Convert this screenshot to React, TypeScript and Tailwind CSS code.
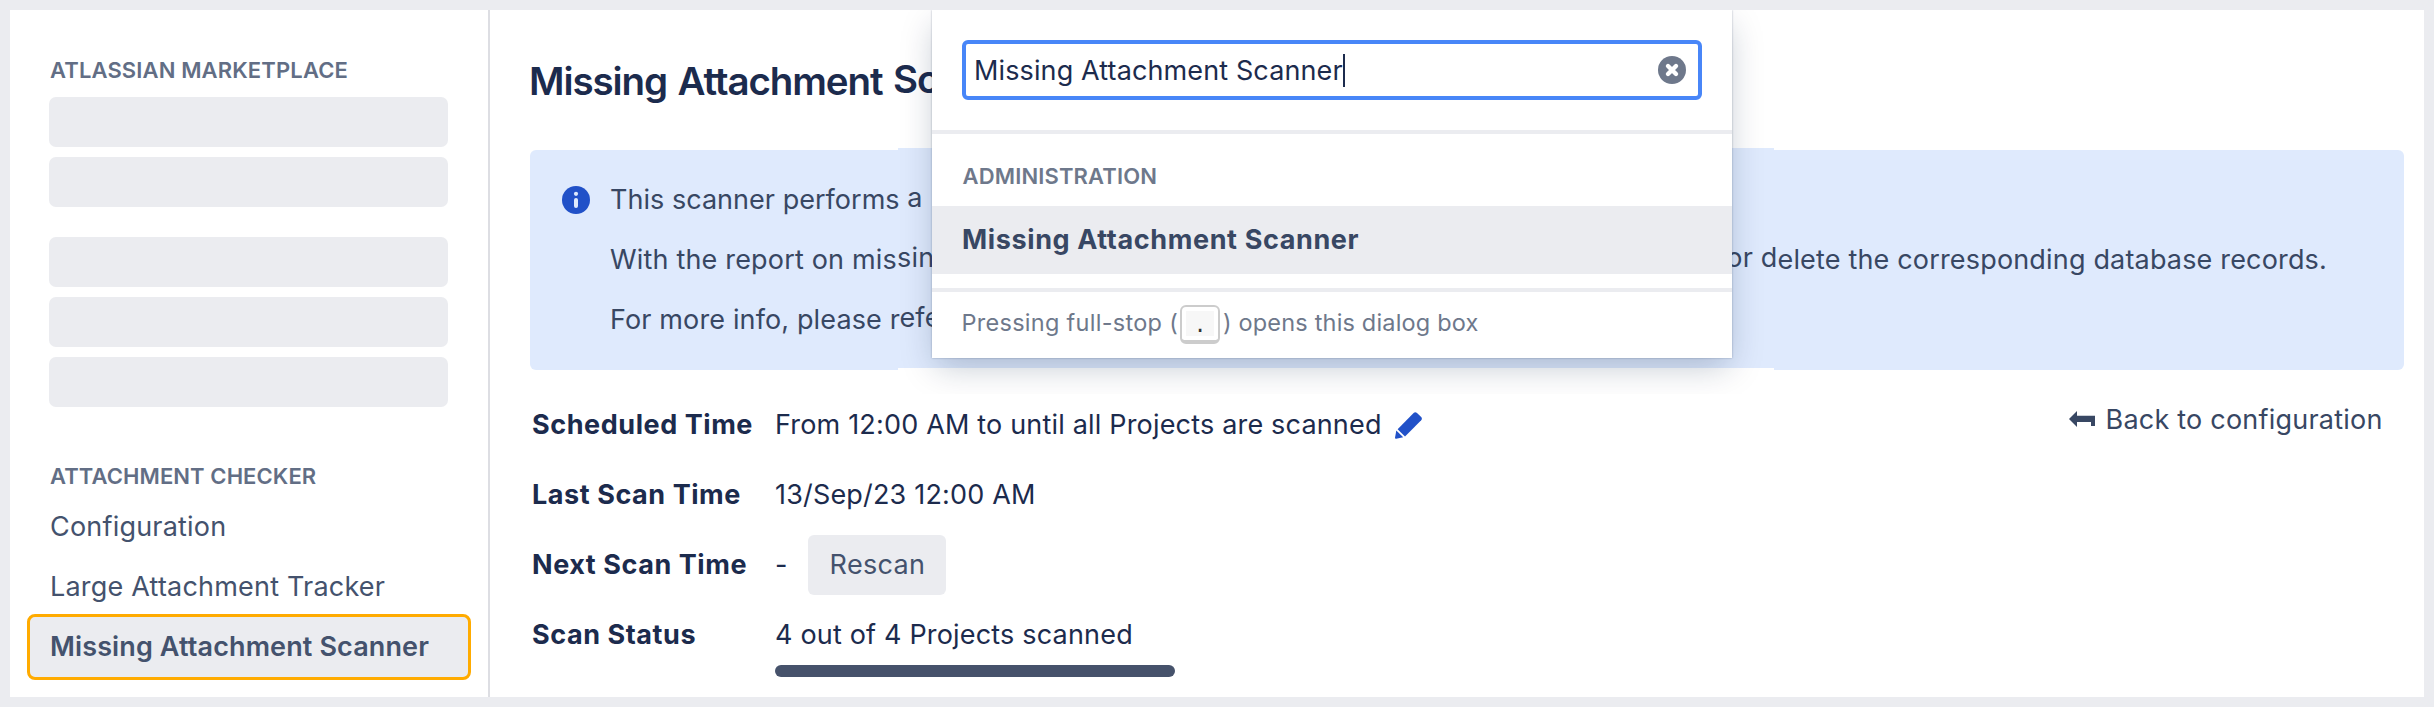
import type { ReactNode } from 'react'

const marketplaceGroups = [2, 3]

interface NavItemProps {
  label: string
  active?: boolean
}

function NavItem({ label, active }: NavItemProps) {
  if (active) {
    return (
      <a className="-mx-[22px] -my-[3px] flex h-[66px] items-center rounded-lg border-[3px] border-[#ffab00] bg-[#ebecf0] pl-[20px] font-semibold tracking-[0.12px]">
        {label}
      </a>
    )
  }
  return <a className="flex h-[60px] items-center pl-[1px] tracking-[0.2px]">{label}</a>
}

function Sidebar() {
  return (
    <aside className="w-[480px] shrink-0 border-r-2 border-[#dddee3] pr-[39px] pl-[39px] text-[27px] text-[#44526d]">
      <h2 className="mt-[45px] mb-[12px] pl-[1px] text-[22px] leading-[30px] font-semibold tracking-[0.14px] text-[#626e85]">
        ATLASSIAN MARKETPLACE
      </h2>
      <div className="flex flex-col gap-[30px]">
        {marketplaceGroups.map((count) => (
          <div key={count} className="flex flex-col gap-[10px]">
            {Array.from({ length: count }, (_, i) => (
              <div key={i} className="h-[50px] w-[399px] rounded-[7px] bg-[#ebecf0]" />
            ))}
          </div>
        ))}
      </div>
      <h2 className="mt-[54px] mb-[6px] pl-[1px] text-[22px] leading-[30px] font-semibold tracking-[0.09px] text-[#626e85]">
        ATTACHMENT CHECKER
      </h2>
      <nav className="w-[400px]">
        <NavItem label="Configuration" />
        <NavItem label="Large Attachment Tracker" />
        <NavItem label="Missing Attachment Scanner" active />
      </nav>
    </aside>
  )
}

function InfoIcon() {
  return (
    <svg viewBox="0 0 28 28" className="size-7">
      <circle cx="14" cy="14" r="14" fill="#2151c8" />
      <circle cx="14" cy="7.8" r="2.1" fill="#dfeafd" />
      <rect x="12" y="12" width="4" height="10" rx="2" fill="#dfeafd" />
    </svg>
  )
}

function PencilIcon() {
  return (
    <svg viewBox="0 0 27 27" className="size-[27px]" fill="#2151c8">
      <path d="M18.6 1q1.6-1.6 3.4 0L26.2 5q1.4 1.7 0 3.2L10 24.4 2.6 17.3Z" />
      <path d="M1.3 18.6 8.2 25.3 1.2 26.8Q0 27 0 25.7Z" />
    </svg>
  )
}

function BackArrowIcon() {
  return (
    <svg viewBox="0 0 26 16" className="h-4 w-[26px]" fill="#384763">
      <path d="M0 8 8 0V4.7H26V15H22V11H8V16Z" />
    </svg>
  )
}

function ClearIcon() {
  return (
    <svg viewBox="0 0 28 28" className="size-7">
      <circle cx="14" cy="14" r="14" fill="#6e788b" />
      <path d="M10 10 18 18M18 10 10 18" stroke="#fff" strokeWidth="4.4" strokeLinecap="round" />
    </svg>
  )
}

// Part of the line that sits in the raised band behind the dialog
function Raised({ children }: { children: ReactNode }) {
  return <span className="relative -top-[2px]">{children}</span>
}

function InfoPanel() {
  return (
    <div className="flex h-[220px] rounded-[6px] bg-[#dfeafd] pt-5 pr-[77px] pl-8 text-[27px] leading-[60px] whitespace-nowrap text-[#384763]">
      <div className="flex h-[60px] items-center">
        <InfoIcon />
      </div>
      <div className="ml-5 flex-1">
        <p className="tracking-[0.03px]">
          This scanner performs<Raised> a</Raised>
        </p>
        <p className="flex justify-between">
          <span className="tracking-[0.18px]">
            With the report on mis<Raised>sin</Raised>
          </span>
          <span className="tracking-[0.17px]">
            <Raised>or d</Raised>elete the corresponding database records.
          </span>
        </p>
        <p className="tracking-[0.13px]">
          For more info, please r<Raised>efe</Raised>
        </p>
      </div>
    </div>
  )
}

function DetailRow({ label, children }: { label: string; children: ReactNode }) {
  return (
    <div className="flex h-[70px] items-center">
      <dt className="w-[243px] font-bold tracking-[0.56px]">{label}</dt>
      <dd className="flex items-center tracking-[0.18px]">{children}</dd>
    </div>
  )
}

function ScanDetails() {
  return (
    <dl className="pl-[2px] text-[27px] whitespace-nowrap text-[#1c2b4d]">
      <DetailRow label="Scheduled Time">
        <span className="mr-[13px]">From 12:00 AM to until all Projects are scanned</span>
        <PencilIcon />
      </DetailRow>
      <DetailRow label="Last Scan Time">13/Sep/23 12:00 AM</DetailRow>
      <DetailRow label="Next Scan Time">
        <span className="w-[33px]">-</span>
        <button className="h-[60px] w-[138px] rounded-[6px] bg-[#ebecf0] pl-[1px] tracking-[0.34px] text-[#44526d]">
          Rescan
        </button>
      </DetailRow>
      <DetailRow label="Scan Status">4 out of 4 Projects scanned</DetailRow>
      <div className="-mt-[5px] ml-[243px] h-3 w-[400px] rounded-full bg-[#46526b]" />
    </dl>
  )
}

function SearchDialog() {
  return (
    <div className="absolute top-0 left-[34px] h-[348px] w-[800px] bg-white text-[#6e788b] shadow-[0_12px_32px_-4px_rgba(9,30,66,0.25),0_0_2px_rgba(9,30,66,0.31)]">
      <div className="h-[124px] border-b-4 border-[#ebecf0] px-[30px] pt-[30px]">
        <div className="flex h-[60px] items-center rounded-[6px] border-4 border-[#4886f8] pr-[12px] pl-[8px] text-[27px] text-[#1c2b4d]">
          <span className="pt-[3px] tracking-[0.12px]">Missing Attachment Scanner</span>
          <span className="h-[33px] w-[2px] bg-[#1c2b4d]" />
          <span className="ml-auto">
            <ClearIcon />
          </span>
        </div>
      </div>
      <h3 className="mt-[27px] mb-[15px] pl-[30.5px] text-[22px] leading-[30px] font-semibold tracking-[0.15px]">
        ADMINISTRATION
      </h3>
      <div className="flex h-[68px] items-center bg-[#ebecf0] pl-[30px] text-[27px] font-bold tracking-[0.62px] text-[#384763]">
        Missing Attachment Scanner
      </div>
      <div className="mt-[14px] flex h-[70px] border-t-4 border-[#ebecf0] pl-[29.5px] text-[23.5px] leading-[62px] whitespace-nowrap">
        <span className="tracking-[0.28px]">Pressing full-stop (</span>
        <kbd className="mt-[13px] ml-[2px] h-[39px] w-[40px] rounded-[6px] border-2 border-b-4 border-[#ccc] p-1">
          <span className="block h-[25px] bg-[#f7f7f7] text-center font-[Liberation_Mono] text-[22px] leading-[31px] text-[#333]">
            .
          </span>
        </kbd>
        <span className="ml-[3px] tracking-[0.18px]">) opens this dialog box</span>
      </div>
    </div>
  )
}

export default function App() {
  return (
    <div className="relative flex h-[707px] w-[2434px] overflow-hidden border-10 border-[#ebecf0] bg-white font-[Inter,sans-serif]">
      <Sidebar />
      <main className="flex-1 pt-[46px] pr-5 pl-10">
        <h1 className="mb-[44px] -ml-[1px] text-[38.5px] leading-[50px] font-semibold tracking-[-1.1px] [word-spacing:2px] text-[#1c2b4d]">
          Missing Attachment <Raised>Sc</Raised>
        </h1>
        <InfoPanel />
        <div className="mt-5 flex justify-between">
          <ScanDetails />
          <a className="flex w-[335px] text-[27px] leading-[60px] tracking-[0.22px] whitespace-nowrap text-[#384763]">
            <span className="mt-[21px] mr-[10.5px]">
              <BackArrowIcon />
            </span>
            Back to configuration
          </a>
        </div>
      </main>

      {/* Dialog overlay, its shadow is cut at the edges of the band */}
      <div className="absolute top-[138px] left-[888px] h-[2px] w-[876px] bg-[#dfeafd]" />
      <div className="absolute top-[358px] left-[888px] h-[2px] w-[876px] bg-white" />
      <div className="absolute -top-px left-[888px] h-[385px] w-[876px] overflow-hidden border-t border-[#dfe0e2]">
        <SearchDialog />
      </div>
    </div>
  )
}
